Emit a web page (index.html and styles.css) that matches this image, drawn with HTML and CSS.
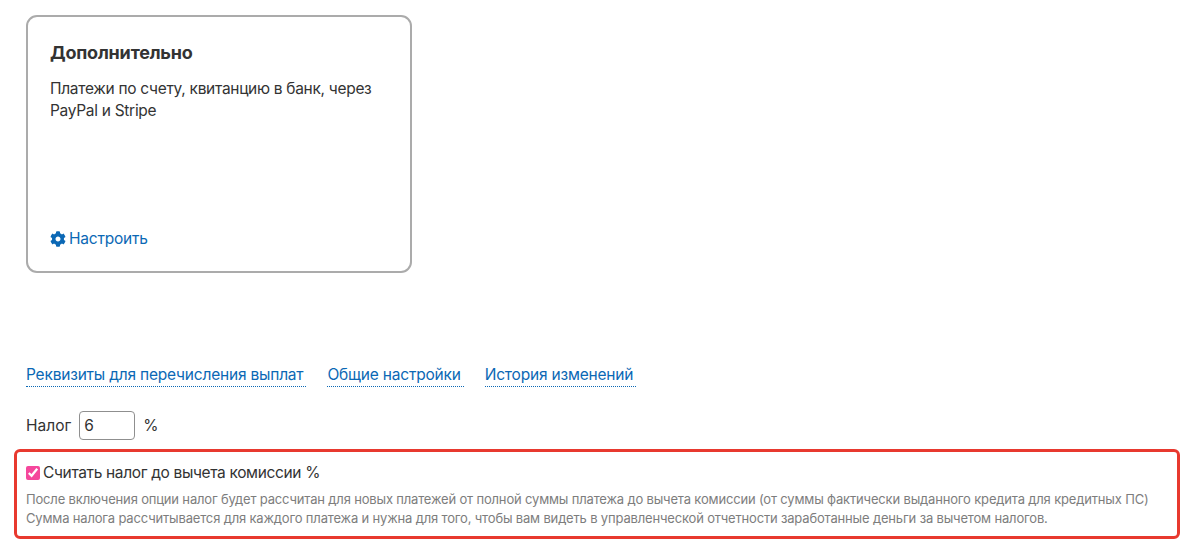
FILE: index.html
```html
<!DOCTYPE html>
<html lang="en">
<head>
    <meta charset="UTF-8">
    <title>Налог</title>
    <link rel="stylesheet" href="styles.css">
</head>
<body>
    <div class="content">
        <div class="card">
            <div class="card-title">Дополнительно</div>
            <p class="card-text">Платежи по счету, квитанцию в банк, через PayPal и Stripe</p>
            <a class="card-link" href="#">
                <svg class="gear" viewBox="0 0 512 512"><path d="M487.4 315.7l-42.6-24.6c4.3-23.2 4.3-47 0-70.2l42.6-24.6c4.9-2.8 7.1-8.6 5.5-14-11.1-35.6-30-67.8-54.7-94.6-3.8-4.1-10-5.1-14.8-2.3L380.8 110c-17.9-15.4-38.5-27.3-60.8-35.1V25.8c0-5.6-3.9-10.5-9.4-11.7-36.7-8.2-74.3-7.8-109.2 0-5.5 1.2-9.4 6.1-9.4 11.7V75c-22.2 7.9-42.8 19.8-60.8 35.1L88.7 85.5c-4.9-2.8-11-1.9-14.8 2.3-24.7 26.7-43.6 58.9-54.7 94.6-1.7 5.4.6 11.2 5.5 14L67.3 221c-4.3 23.2-4.3 47 0 70.2l-42.6 24.6c-4.9 2.8-7.1 8.6-5.5 14 11.1 35.6 30 67.8 54.7 94.6 3.8 4.1 10 5.1 14.8 2.3l42.6-24.6c17.9 15.4 38.5 27.3 60.8 35.1v49.2c0 5.6 3.9 10.5 9.4 11.7 36.7 8.2 74.3 7.8 109.2 0 5.5-1.2 9.4-6.1 9.4-11.7v-49.2c22.2-7.9 42.8-19.8 60.8-35.1l42.6 24.6c4.9 2.8 11 1.9 14.8-2.3 24.7-26.7 43.6-58.9 54.7-94.6 1.5-5.5-.7-11.3-5.6-14.1zM256 336c-44.1 0-80-35.9-80-80s35.9-80 80-80 80 35.9 80 80-35.9 80-80 80z"/></svg>
                <span>Настроить</span>
            </a>
        </div>

        <div class="tabs">
            <a class="tab-link" href="#">Реквизиты для перечисления выплат</a>
            <a class="tab-link" href="#">Общие настройки</a>
            <a class="tab-link" href="#">История изменений</a>
        </div>

        <div class="tax-row">
            <label for="tax">Налог</label>
            <input id="tax" class="tax-input" type="text" value="6">
            <span>%</span>
        </div>

        <div class="highlight">
            <label class="check-row">
                <input class="check" type="checkbox" checked>
                <span>Считать налог до вычета комиссии %</span>
            </label>
            <div class="hint">После включения опции налог будет рассчитан для новых платежей от полной суммы платежа до вычета комиссии (от суммы фактически выданного кредита для кредитных ПС)</div>
            <div class="hint">Сумма налога рассчитывается для каждого платежа и нужна для того, чтобы вам видеть в управленческой отчетности заработанные деньги за вычетом налогов.</div>
        </div>
    </div>
</body>
</html>
```

FILE: styles.css
```css
body {
    font-family: Inter, "Noto Sans", sans-serif;
    background: #ffffff;
    color: #333333;
    margin: 0;
    font-size: 15.5px;
}

.content {
    padding: 15px 20px 0 26px;
}

.card {
    width: 386px;
    height: 258px;
    box-sizing: border-box;
    border: 2px solid #ababab;
    border-radius: 11px;
    padding: 24px 22px 21px;
    display: flex;
    flex-direction: column;
}

.card-title {
    font-size: 18px;
    font-weight: 700;
    line-height: 24px;
    letter-spacing: -0.2px;
}

.card-text {
    margin: 13px 0 0;
    line-height: 22px;
    letter-spacing: -0.3px;
    flex: 1;
}

.card-link {
    display: flex;
    align-items: center;
    gap: 3px;
    color: #0b68b5;
    text-decoration: none;
    letter-spacing: -0.2px;
    line-height: 22px;
}

.gear {
    width: 16px;
    height: 16px;
    fill: #0b68b5;
}

.tabs {
    display: flex;
    gap: 21px;
    margin-top: 92px;
    line-height: 20px;
}

.tab-link {
    color: #0b68b5;
    text-decoration: none;
    border-bottom: 1px dotted #0b68b5;
    padding: 0 3px 1px 0;
    letter-spacing: -0.2px;
}

.tax-row {
    display: flex;
    align-items: center;
    gap: 8px;
    margin-top: 24px;
}

.tax-input {
    width: 56px;
    height: 29px;
    box-sizing: border-box;
    border: 1px solid #8f8f8f;
    border-radius: 4px;
    padding: 0 4px;
    font: inherit;
    color: inherit;
}

.highlight {
    margin: 9px 0 0 -12px;
    width: 1166px;
    height: 90px;
    box-sizing: border-box;
    border: 3px solid #e8392f;
    border-radius: 6px;
    padding: 9px 9px 0;
}

.check-row {
    display: flex;
    align-items: center;
    gap: 3px;
    line-height: 24px;
    letter-spacing: -0.35px;
    margin-bottom: 5px;
}

.check {
    margin: 0;
    width: 14px;
    height: 14px;
    accent-color: #f5479c;
}

.hint {
    font-size: 13px;
    line-height: 19px;
    letter-spacing: -0.17px;
    color: #7d7d7d;
    white-space: nowrap;
}
```
